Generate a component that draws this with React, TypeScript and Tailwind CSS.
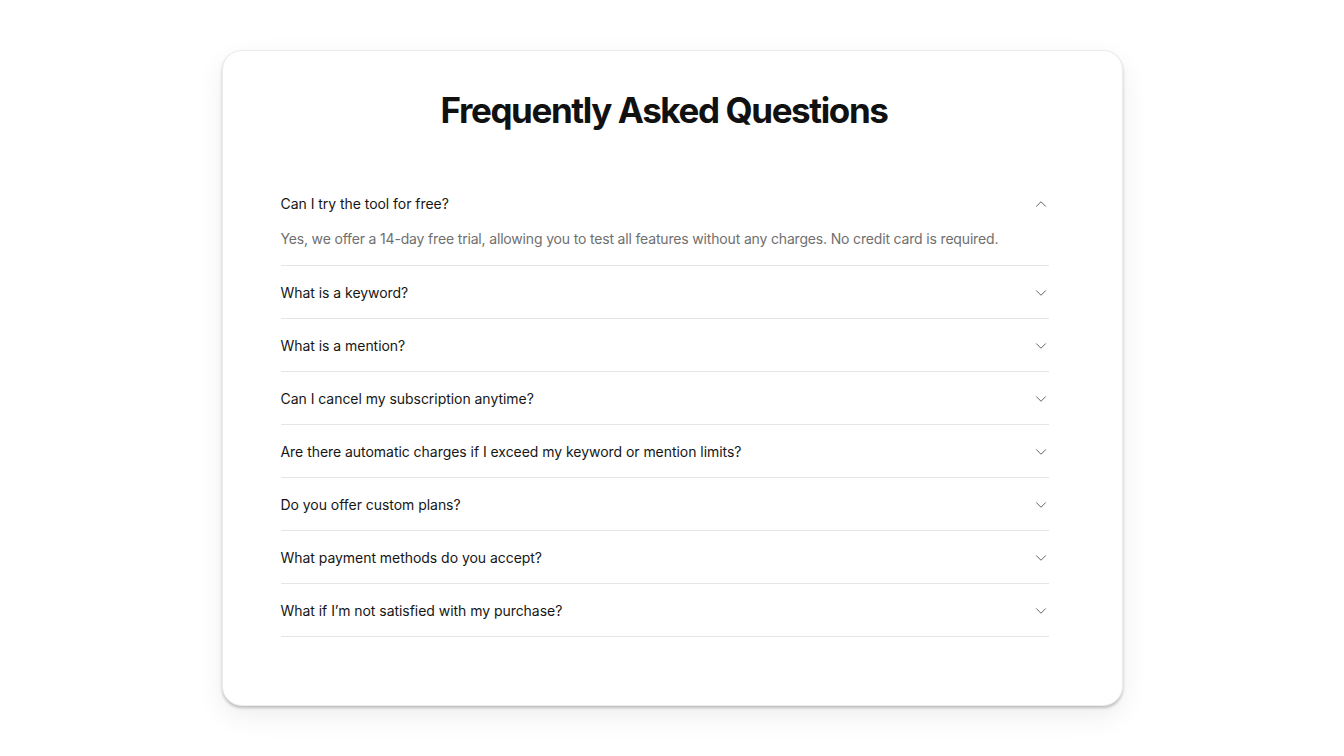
import React, { useState } from 'react'
import { ChevronDown } from 'lucide-react'

const faqs = [
  {
    q: 'Can I try the tool for free?',
    a: 'Yes, we offer a 14-day free trial, allowing you to test all features without any charges. No credit card is required.',
  },
  { q: 'What is a keyword?', a: 'A keyword is a word or phrase you want to track across the web.' },
  { q: 'What is a mention?', a: 'A mention is any time one of your keywords appears online.' },
  { q: 'Can I cancel my subscription anytime?', a: 'Yes, you can cancel at any time from your account settings.' },
  {
    q: 'Are there automatic charges if I exceed my keyword or mention limits?',
    a: 'No, we will notify you before any changes are made to your plan.',
  },
  { q: 'Do you offer custom plans?', a: 'Yes, contact us and we will put together a plan for your needs.' },
  { q: 'What payment methods do you accept?', a: 'We accept all major credit cards and PayPal.' },
  { q: 'What if I’m not satisfied with my purchase?', a: 'Reach out to support within 30 days for a full refund.' },
]

export default function App() {
  const [open, setOpen] = useState<number | null>(0)

  return (
    <div
      className="min-h-screen w-full bg-white flex justify-center pt-[50px]"
      style={{ fontFamily: 'Inter, "Noto Sans", sans-serif' }}
    >
      <div className="w-[901px] h-[656px] bg-white rounded-[20px] border border-[#ececec] shadow-[0_2px_3px_rgba(0,0,0,0.22),0_10px_28px_rgba(0,0,0,0.07)] pt-[39px] pl-[58px] pr-[74px]">
        <h1 className="text-center text-[35px] leading-[40px] font-bold tracking-[-0.04em] text-[#111] mb-[47px]">
          Frequently Asked Questions
        </h1>
        <div className="w-[768px]">
          {faqs.map((f, i) => {
            const isOpen = open === i
            return (
              <div key={i} className="border-b border-[#e5e5e5]">
                <button
                  type="button"
                  onClick={() => setOpen(isOpen ? null : i)}
                  className="w-full flex items-center justify-between pt-[17px] pb-[15px] text-left text-[14px] leading-5 tracking-[-0.003em] text-[#161616]"
                >
                  <span>{f.q}</span>
                  <ChevronDown
                    size={18}
                    strokeWidth={1.3}
                    className={`text-[#5f5f5f] -mr-[1px] ${isOpen ? 'rotate-180' : ''}`}
                  />
                </button>
                {isOpen && (
                  <div className="pb-4 text-[14px] leading-5 tracking-[-0.012em] text-[#6f6f6f]">{f.a}</div>
                )}
              </div>
            )
          })}
        </div>
      </div>
    </div>
  )
}
